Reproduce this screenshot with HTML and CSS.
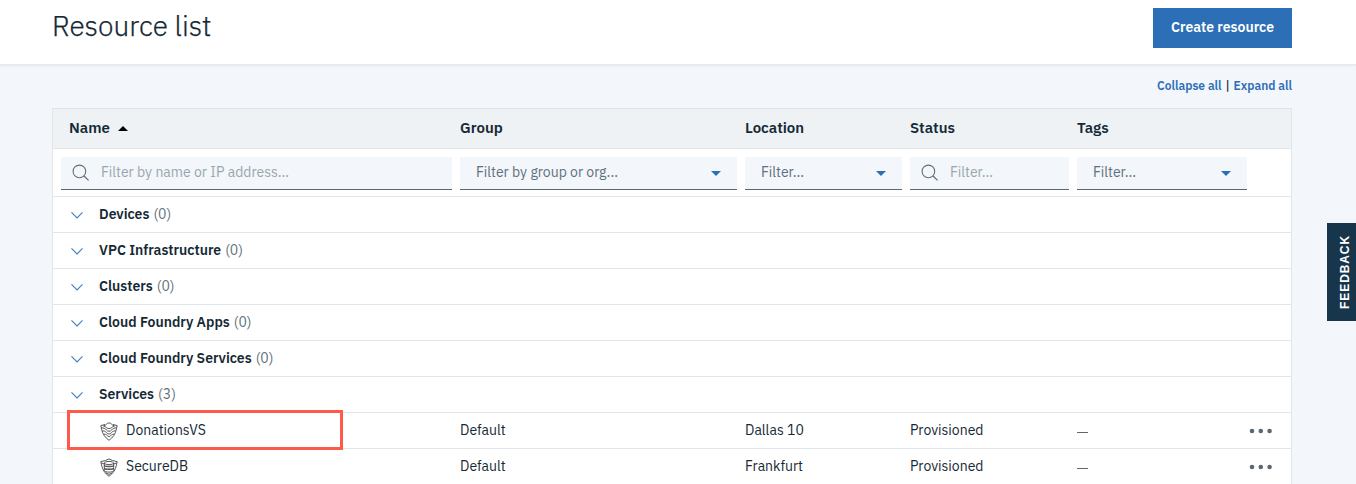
FILE: index.html
```html
<!DOCTYPE html>
<html lang="en">
<head>
<meta charset="utf-8">
<title>Resource list</title>
<link rel="stylesheet" href="styles.css">
</head>
<body>
<svg class="defs" width="0" height="0">
  <symbol id="search" viewBox="0 0 18 18"><circle cx="7.4" cy="7.4" r="6.3" fill="none" stroke="currentColor" stroke-width="1.1"/><path d="M12 12l4.6 4.4" stroke="currentColor" stroke-width="1.3"/></symbol>
  <symbol id="caret" viewBox="0 0 10 5"><path d="M0 0h10L5 5z" fill="currentColor"/></symbol>
  <symbol id="chevron" viewBox="0 0 12 8"><path d="M.5 1.400L6 7 11.500 1.400" fill="none" stroke="currentColor" stroke-width="1.1"/></symbol>
  <symbol id="dots" viewBox="0 0 24 6"><g fill="currentColor"><circle cx="3" cy="3" r="2.3"/><circle cx="11.800" cy="3" r="2.3"/><circle cx="20.600" cy="3" r="2.3"/></g></symbol>
</svg>
<header class="page-header">
  <h1 class="title">Resource list</h1>
  <button class="create"><span>Create resource</span></button>
</header>
<main class="content">
  <nav class="toggles"><a class="toggle">Collapse all</a><span class="bar">|</span><a class="toggle">Expand all</a></nav>
  <section class="table">
    <div class="row head">
      <div class="name-head"><span>Name</span><svg class="sort" width="10" height="5" viewBox="0 0 10 5"><path d="M0 5h10L5 0z"/></svg></div>
      <div>Group</div><div>Location</div><div>Status</div><div>Tags</div>
    </div>
    <div class="row filters">
      <div class="field search"><svg width="18" height="18"><use href="#search"/></svg><span>Filter by name or IP address...</span></div>
      <div class="field select"><span>Filter by group or org...</span><svg width="10" height="5"><use href="#caret"/></svg></div>
      <div class="field select"><span>Filter...</span><svg width="10" height="5"><use href="#caret"/></svg></div>
      <div class="field search"><svg width="18" height="18"><use href="#search"/></svg><span>Filter...</span></div>
      <div class="field select"><span>Filter...</span><svg width="10" height="5"><use href="#caret"/></svg></div>
    </div>
    <div class="group"><svg width="12" height="8"><use href="#chevron"/></svg><b>Devices</b><span class="count">(0)</span></div>
    <div class="group"><svg width="12" height="8"><use href="#chevron"/></svg><b>VPC Infrastructure</b><span class="count">(0)</span></div>
    <div class="group"><svg width="12" height="8"><use href="#chevron"/></svg><b>Clusters</b><span class="count">(0)</span></div>
    <div class="group"><svg width="12" height="8"><use href="#chevron"/></svg><b>Cloud Foundry Apps</b><span class="count">(0)</span></div>
    <div class="group"><svg width="12" height="8"><use href="#chevron"/></svg><b>Cloud Foundry Services</b><span class="count">(0)</span></div>
    <div class="group"><svg width="12" height="8"><use href="#chevron"/></svg><b>Services</b><span class="count">(3)</span></div>
    <div class="row item">
      <div class="item-name">
        <svg class="shield" width="18" height="19" viewBox="0 0 18 19"><g fill="none" stroke="currentColor" stroke-width=".9"><path d="M5 2.500L.8 3.600l.8 3.600C2.500 11.800 5 15.500 9 18.300c4-2.800 6.500-6.500 7.400-11.100l.8-3.600L13 2.500"/><path d="M3.500 4C6 3.600 6.500.9 9 .9s3 2.700 5.500 3.100C12 4.500 11.500 6.600 9 6.600S6 4.500 3.500 4zM1.600 5.700l2.600.6C6 6.600 6.500 9.300 9 9.300s3-2.700 4.800-3l2.600-.6M2.500 8.800l2.200.4C6.200 9.500 6.800 12 9 12s2.800-2.500 4.300-2.800l2.200-.4M4 12.100l1.400.3c1.600.3 2.300 2.200 3.600 2.200s2-1.900 3.600-2.200l1.400-.3"/></g></svg>
        <span>DonationsVS</span>
      </div>
      <div>Default</div><div>Dallas 10</div><div>Provisioned</div>
      <div class="tags"><i class="dash"></i><svg class="more" width="24" height="6"><use href="#dots"/></svg></div>
      <div class="highlight"></div>
    </div>
    <div class="row item">
      <div class="item-name">
        <svg class="shield" width="18" height="19" viewBox="0 0 18 19"><g fill="none" stroke="currentColor" stroke-width=".9"><path d="M5.500 2.500L9 .9l3.500 1.600 4.700 1.100-.8 3.600C15.500 11.800 13 15.500 9 18.300 5 15.500 2.500 11.800 1.600 7.200L.8 3.600zM1.500 5l2.800 1M16.500 5l-2.800 1M6 15l3 1.300L12 15"/><ellipse cx="9" cy="5" rx="4.700" ry="1.600"/><path d="M4.300 5v7.600c0 2 9.400 2 9.400 0V5M4.300 7.300c0 2 9.400 2 9.400 0M4.300 10c0 2 9.400 2 9.400 0M4.500 8.200h9M4.500 11h9"/></g></svg>
        <span>SecureDB</span>
      </div>
      <div>Default</div><div>Frankfurt</div><div>Provisioned</div>
      <div class="tags"><i class="dash"></i><svg class="more" width="24" height="6"><use href="#dots"/></svg></div>
    </div>
  </section>
</main>
<button class="feedback"><span>FEEDBACK</span></button>
</body>
</html>
```

FILE: styles.css
```css
* { box-sizing: border-box; }
html, body { height: 100%; }
body { margin: 0; overflow: hidden; background: #f3f6fb; color: #152935; font: 14px/20px "IBM Plex Sans", Roboto, sans-serif; }
.defs { position: absolute; }
svg { flex: none; display: block; }
.page-header { height: 65px; padding: 8px 64px 0 52px; display: flex; justify-content: space-between; align-items: flex-start; background: #fff; border-bottom: 1px solid #e3e9ec; box-shadow: 0 1px 2px rgba(0,0,0,.06); }
.title { margin: 0; font-size: 28px; line-height: 36px; font-weight: 300; -webkit-text-stroke: .25px #152935; }
.create { width: 139px; height: 40px; padding: 0 0 2px; border: 0; background: #2d6fb7; color: #fff; font: 600 14px/20px "IBM Plex Sans", Roboto, sans-serif; }
.content { padding: 0 64px 0 52px; }
.toggles { height: 43px; padding-top: 11px; display: flex; justify-content: flex-end; font-size: 12px; line-height: 20px; }
.toggle { color: #2d6fb7; font-weight: 600; }
.bar { width: 12px; text-align: center; font-weight: 500; }
.table { width: 1240px; border: 1px solid #dfe5e9; background: #fff; }
.row { display: grid; grid-template-columns: 391px 277px 157px 159px 1fr; column-gap: 8px; padding-left: 8px; align-items: center; }
.head { height: 40px; padding-bottom: 2px; background: #eef2f5; border-bottom: 1px solid #dfe5e9; font-size: 15px; font-weight: 600; }
.name-head { display: flex; align-items: center; gap: 8px; padding-left: 8px; }
.sort { fill: #000; margin-top: 2px; }
.filters { height: 48px; border-bottom: 1px solid #dfe5e9; grid-template-columns: 391px 277px 157px 159px 170px; color: #5f717b; }
.field { height: 33px; margin-top: 1px; background: #f3f6fb; border-bottom: 1px solid #5a6872; display: flex; align-items: center; padding-bottom: 1px; }
.search { padding-left: 11px; gap: 11px; }
.search svg { color: #5f717b; margin-top: 2px; }
.search span { color: #9aa6ad; }
.select { padding: 0 16px 2px; justify-content: space-between; }
.select svg { color: #2d6fb7; margin-top: 3px; }
.group { height: 36px; display: flex; align-items: center; padding: 0 0 2px 18px; border-bottom: 1px solid #dfe5e9; }
.group svg { color: #3d7cc4; margin: 3px 16px 0 0; }
.group b { font-weight: 600; }
.count { margin-left: 4px; color: #5f717b; }
.item { position: relative; height: 36px; padding-bottom: 2px; border-bottom: 1px solid #dfe5e9; }
.item-name { display: flex; align-items: center; gap: 8px; padding-left: 39px; }
.shield { color: #444; margin-top: 3px; }
.tags { display: flex; align-items: center; justify-content: space-between; padding-right: 18.5px; color: #5a6872; }
.dash { width: 11px; height: 1px; margin-top: 5px; background: #5a6872; }
.more { margin-top: 2px; }
.highlight { position: absolute; left: 14px; top: -3px; width: 276px; height: 40px; border: 3px solid #fd5a4c; z-index: 1; }
.feedback { position: absolute; right: 0; top: 223px; width: 29px; height: 98px; padding: 0 0 0 7px; border: 0; background: #17364b; color: #fff; font: 700 12px/20px "Liberation Sans", sans-serif; display: flex; align-items: center; justify-content: center; }
.feedback span { writing-mode: vertical-rl; transform: rotate(180deg); letter-spacing: .9px; }
```
